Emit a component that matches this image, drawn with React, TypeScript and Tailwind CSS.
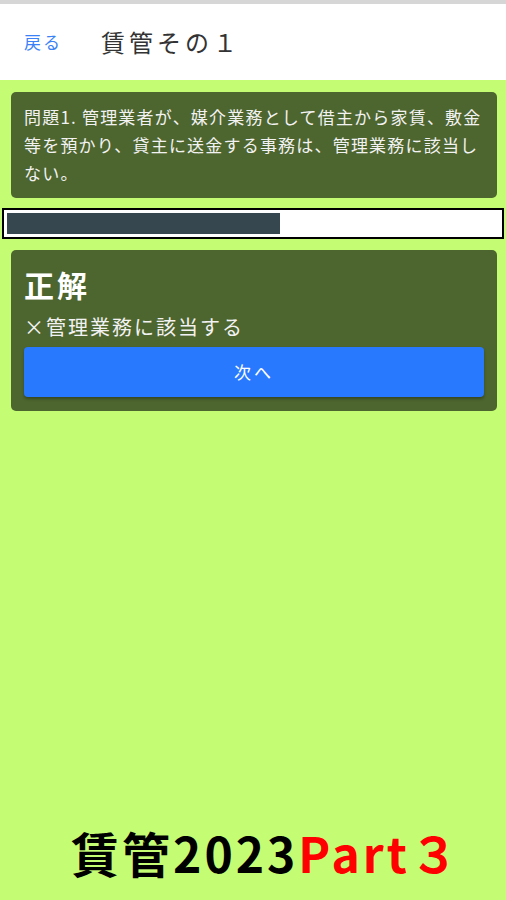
import React from 'react'

const jp = { fontFamily: '"Noto Sans CJK JP", "Noto Sans", sans-serif' }

const progress = 55.5

const questionLines = [
  '問題1. 管理業者が、媒介業務として借主から家賃、敷金',
  '等を預かり、貸主に送金する事務は、管理業務に該当し',
  'ない。',
]

export default function App() {
  return (
    <div className="flex h-[900px] w-[506px] flex-col overflow-hidden bg-[#c4fc74]" style={jp}>
      {/* Header */}
      <div className="h-[4px] bg-[#d6d6d6]" />
      <header className="flex h-[76px] items-center bg-white pl-[24px]">
        <button className="text-[17px] tracking-[2px] text-[#3b82f6]">戻る</button>
        <h1 className="ml-[39px] text-[24px] tracking-[4px] text-[#333333]">賃管その１</h1>
      </header>

      {/* Question */}
      <div className="ml-[11px] mr-[9px] mt-[12px] rounded-[5px] bg-[#4d652e] px-[13px] py-[11px]">
        <p className="text-[17px] leading-[28px] tracking-[1.2px] text-[#f2f2f2]">
          {questionLines.map((line) => (
            <span key={line} className="block whitespace-nowrap">
              {line}
            </span>
          ))}
        </p>
      </div>

      {/* Progress */}
      <div className="mx-[2px] mt-[10px] h-[31px] border-2 border-black bg-white p-[3px]">
        <div className="h-full bg-[#37474f]" style={{ width: `${progress}%` }} />
      </div>

      {/* Answer */}
      <div className="ml-[11px] mr-[9px] mt-[11px] rounded-[5px] bg-[#4d652e] px-[13px] pb-[14px] pt-[12px]">
        <div className="text-[30px] font-bold leading-[44px] tracking-[3px] text-white">正解</div>
        <div className="mt-[7px] text-[20px] leading-[28px] tracking-[2px] text-[#f2f2f2]">×管理業務に該当する</div>
        <button className="mt-[6px] flex h-[50px] w-full items-center justify-center rounded-[4px] bg-[#2979ff] text-[17px] tracking-[3px] text-white shadow-[0_2px_3px_rgba(0,0,0,0.3)]">
          次へ
        </button>
      </div>

      <div className="flex-1" />

      {/* Bottom caption */}
      <div className="pb-[18px] pl-[26px] text-center text-[48px] font-bold leading-[60px] tracking-[3px]">
        <span className="text-black">賃管2023</span>
        <span className="text-[#ff0000]">Part３</span>
      </div>
    </div>
  )
}
